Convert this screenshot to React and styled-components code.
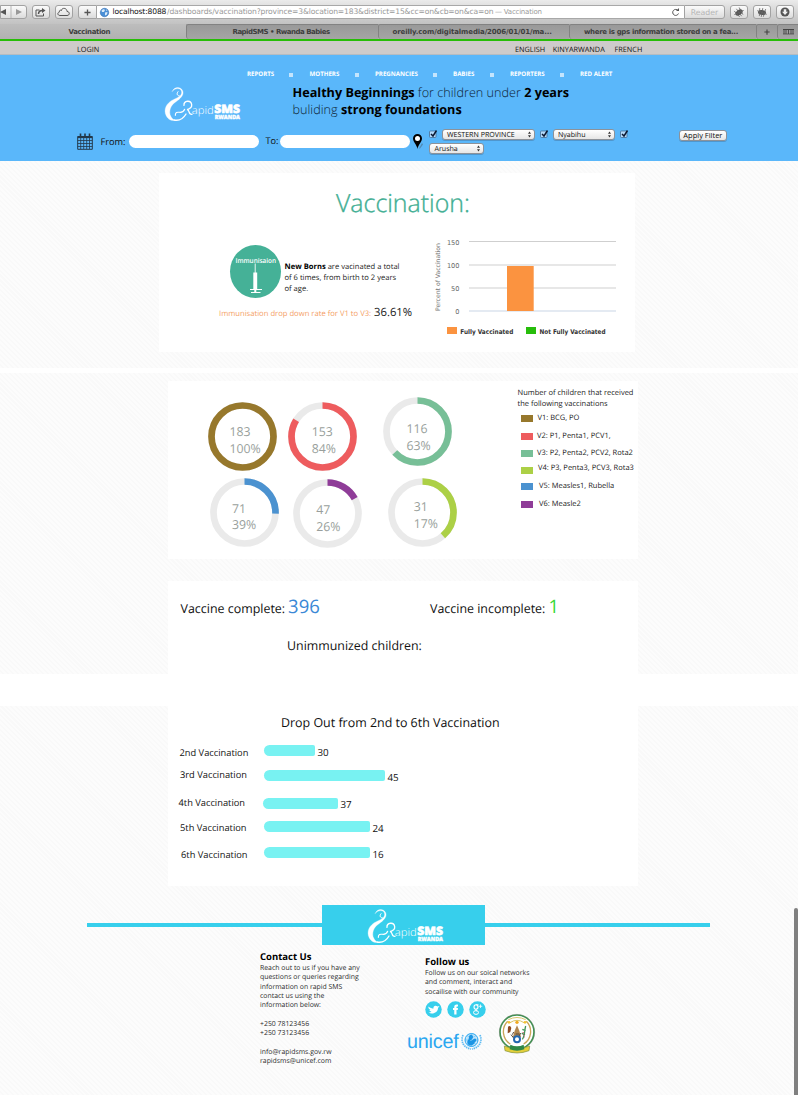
import React from "react";
import styled, { createGlobalStyle } from "styled-components";

const sans = '"Open Sans", "Noto Sans", sans-serif';
const system = '"DejaVu Sans", "Liberation Sans", sans-serif';
const aqua = "#37cfec";

const GlobalStyle = createGlobalStyle`
  * { box-sizing: border-box; }
  body { margin: 0; background: #fff; font-family: ${sans}; color: #111; overflow: hidden; text-rendering: geometricPrecision; }
  svg { display: block; flex: none; overflow: visible; }
`;

const Page = styled.div`
  position: relative;
  width: 798px;
  height: 1095px;
  overflow: hidden;
  white-space: nowrap;
`;

/* ---------- browser chrome ---------- */
const Toolbar = styled.div`
  display: flex;
  align-items: flex-start;
  height: 24px;
  padding-top: 5px;
  background: linear-gradient(#ebebeb, #d0d0d0 60%, #c2c2c2);
  font-family: ${system};
`;
const ToolButton = styled.div`
  display: flex;
  align-items: center;
  justify-content: ${(p) => p.$justify || "center"};
  width: ${(p) => p.$w}px;
  height: 14px;
  margin-left: ${(p) => p.$gap || 0}px;
  padding: 0 1px;
  border: 1px solid #a2a2a2;
  border-radius: ${(p) => p.$radius || "3px"};
  background: linear-gradient(#fbfbfb, #dcdcdc);
`;
const AddressField = styled.div`
  display: flex;
  align-items: center;
  width: 587px;
  height: 14px;
  padding: 0 4px 0 3px;
  border: 1px solid #a8a8a8;
  border-width: 1px 0;
  background: #fff;
  font-size: 7.6px;
  line-height: 12px;
  color: #999;
`;
const Host = styled.span`
  width: 54.5px;
  margin-left: 3.5px;
  color: #111;
  letter-spacing: -0.16px;
`;
const Path = styled.span`
  width: 325px;
  letter-spacing: -0.14px;
`;
const PageName = styled.span`
  flex: 1;
  font-size: 7px;
  letter-spacing: -0.22px;
  padding-left: 3px;
`;
const ReaderLabel = styled.span`
  color: #b5b5b5;
  font-size: 7.8px;
`;
const TabStrip = styled.div`
  display: grid;
  grid-template-columns: 186px 191.5px 191.5px 187px 21px 21px;
  height: 15px;
  background: linear-gradient(#bdbdbd, #b1b1b1);
`;
const Tab = styled.div`
  display: flex;
  align-items: center;
  padding-left: ${(p) => p.$pad}px;
  border: solid #828282;
  border-width: ${(p) => (p.$active ? "0" : "1px 0 0 1px")};
  border-radius: 2px 0 0 3px;
  background: ${(p) => (p.$active ? "transparent" : "linear-gradient(#999, #a5a5a5)")};
  color: #3e3e3e;
  font: bold 7px/14px ${system};
  letter-spacing: ${(p) => p.$ls || 0}px;
`;
const LanguageBar = styled.div`
  display: flex;
  height: 16px;
  padding: 3px 0 0 77px;
  border-top: 2px solid #27bd07;
  border-bottom: 1px solid #b5bcc2;
  background: #cecbca;
  font-size: 7.3px;
  line-height: 12px;
`;
const BarLink = styled.span`
  width: ${(p) => p.$w}px;
`;

/* ---------- header ---------- */
const Header = styled.header`
  height: 106px;
  background: #5ab7fa;
`;
const Nav = styled.nav`
  display: grid;
  grid-template-columns: 62.5px 65.5px 78px 57px 70px 40px;
  height: 28px;
  padding: 9px 0 0 247px;
  color: #fff;
  font-size: 6.15px;
  font-weight: 700;
  line-height: 10px;
`;
const NavItem = styled.div`
  display: flex;
  align-items: center;
  justify-content: space-between;
  padding-right: 16.5px;
`;
const NavDot = styled.i`
  width: 4px;
  height: 4px;
  margin-top: 2px;
  background: #c4e5fd;
`;
const Brand = styled.div`
  display: flex;
  height: 46px;
  padding-left: 163.5px;
`;
const BrandLogo = styled.div`
  width: 129px;
  padding-top: 3px;
`;
const Slogan = styled.p`
  margin: 1px 0 0;
  font-size: 12.65px;
  font-weight: 300;
  line-height: 17px;
  color: #0d2334;
  b { color: #000; font-weight: 700; }
`;
const Filters = styled.form`
  display: flex;
  height: 32px;
  padding-left: 77px;
  font-size: 9.2px;
`;
const CalendarHolder = styled.div`
  padding-top: 4px;
`;
const FilterLabel = styled.label`
  width: ${(p) => p.$w}px;
  margin: ${(p) => p.$top}px 0 0 ${(p) => p.$left}px;
  line-height: 12px;
`;
const DateInput = styled.input`
  width: 130px;
  height: 13px;
  margin: 6px 0 0;
  border: 0;
  border-radius: 7px;
  background: #fff;
`;
const PinHolder = styled.div`
  width: 19px;
  padding: 5px 0 0 3px;
`;
const Places = styled.div`
  display: flex;
  flex-wrap: wrap;
  align-content: flex-start;
  width: 250px;
  row-gap: 3px;
`;
const CheckHolder = styled.span`
  width: ${(p) => p.$w}px;
`;
const control = `
  border: 1px solid #8d9299;
  border-radius: 3px;
  background: linear-gradient(#fff, #e6e6e6);
  box-shadow: 0 1px 0 rgba(60, 90, 120, 0.35);
  color: #111;
  font-family: "Open Sans", sans-serif;
  font-size: 7.1px;
  line-height: 10px;
`;
const Picker = styled.div`
  ${control}
  display: flex;
  align-items: center;
  justify-content: space-between;
  width: ${(p) => p.$w}px;
  height: 11px;
  margin-right: ${(p) => p.$gap || 0}px;
  padding: 0 2px 0 4px;
`;
const ApplyButton = styled.button`
  ${control}
  width: 48px;
  height: 11px;
  margin: 1px 0 0 -0.5px;
  padding: 0;
  font-size: 7.5px;
  line-height: 9px;
`;

/* ---------- sections ---------- */
const Textured = styled.section`
  height: ${(p) => p.$h}px;
  margin-bottom: ${(p) => p.$gap || 0}px;
  padding-top: ${(p) => p.$top || 0}px;
  background: repeating-linear-gradient(45deg, #fcfcfc 0 2px, #f9f9f9 2px 3.5px);
`;
const Card = styled.div`
  width: ${(p) => p.$w || 470}px;
  height: ${(p) => p.$h}px;
  margin-left: ${(p) => p.$left || 168}px;
  margin-bottom: ${(p) => p.$gap || 0}px;
  background: #fff;
`;
const Title = styled.h1`
  margin: 0;
  padding: 12px 0 0 177px;
  height: 68px;
  font-size: 24.9px;
  font-weight: 300;
  line-height: 36px;
  color: #3fae93;
  -webkit-text-stroke: 0.35px #3fae93;
`;
const Overview = styled.div`
  display: flex;
  padding-left: 60px;
`;
const Facts = styled.div`
  width: 214px;
  padding-top: 4px;
`;
const FactRow = styled.div`
  display: flex;
  height: 59px;
  padding-left: 11px;
`;
const FactText = styled.p`
  margin: 16.5px 0 0 3.5px;
  font-size: 7.6px;
  line-height: 11px;
  color: #222;
  b { color: #000; }
`;
const DropRate = styled.p`
  display: flex;
  align-items: baseline;
  margin: 0;
  font-size: 7.65px;
  line-height: 17px;
  color: #f4a066;
`;
const RateLabel = styled.span`
  width: 155px;
`;
const RateValue = styled.span`
  font-size: 11.3px;
  color: #222;
`;

const DonutPanel = styled.div`
  display: flex;
  justify-content: space-between;
  padding-right: 0.5px;
`;
const DonutRow = styled.div`
  display: flex;
  height: ${(p) => p.$h}px;
`;
const DonutHolder = styled.div`
  width: 69px;
  margin: ${(p) => p.$top}px 0 0 ${(p) => p.$left}px;
`;
const Donuts = styled.div`
  padding-top: 15px;
`;
const Legend = styled.div`
  width: 120px;
  padding-top: 7px;
  font-size: 7.5px;
  line-height: 11px;
  color: #222;
`;
const LegendRows = styled.div`
  padding-top: 3px;
`;
const LegendRow = styled.div`
  display: flex;
  height: ${(p) => p.$h}px;
  padding-left: 3.5px;
`;
const Swatch = styled.i`
  width: 12px;
  height: 7px;
  margin: ${(p) => p.$top}px ${(p) => p.$gap}px 0 0;
  background: ${(p) => p.$color};
`;

const Stats = styled.div`
  display: flex;
  align-items: baseline;
  padding: 13px 0 0 12.5px;
  height: 53px;
  font-size: 12.45px;
  line-height: 26px;
`;
const Stat = styled.div`
  flex: none;
  width: 249.5px;
  span { margin-left: 3px; font-size: 18.5px; color: ${(p) => p.$color}; }
`;
const Unimmunized = styled.div`
  padding-left: 119px;
  font-size: 12.4px;
  line-height: 24px;
`;
const Spacer = styled.div`
  height: 32px;
`;
const DropTitle = styled.h2`
  margin: 0;
  padding: 5px 0 0 113px;
  height: 36px;
  font-size: 12.45px;
  font-weight: 400;
  line-height: 24px;
`;
const BarRow = styled.div`
  display: flex;
  height: ${(p) => p.$h}px;
  padding-left: ${(p) => p.$left}px;
  font-size: 9.3px;
  line-height: 12px;
`;
const BarName = styled.span`
  width: ${(p) => p.$w}px;
  margin-top: ${(p) => p.$top}px;
`;
const Bar = styled.i`
  height: 11px;
  margin: 3px 2.5px 0 0;
  border-radius: 5.5px 2px 2px 5.5px;
  background: #78f2f2;
`;
const BarValue = styled.span`
  margin-top: 4.5px;
  font-size: 9.8px;
`;

/* ---------- footer ---------- */
const Footer = styled.footer``;
const Ribbon = styled.div`
  display: flex;
  align-items: center;
  height: 40px;
  padding-left: 87px;
`;
const RibbonLine = styled.i`
  width: ${(p) => p.$w}px;
  height: 4px;
  background: ${aqua};
`;
const RibbonPlate = styled.div`
  width: 163px;
  height: 40px;
  padding: 3px 0 0 45px;
  background: ${aqua};
`;
const FooterColumns = styled.div`
  display: flex;
  padding-left: 260px;
`;
const FooterColumn = styled.div`
  width: ${(p) => p.$w}px;
  padding-top: ${(p) => p.$top}px;
  font-size: 6.9px;
  line-height: 9.33px;
  color: #2a2a2a;
  p { margin: 0 0 9.33px; }
`;
const FooterHeading = styled.h3`
  margin: 0 0 1px;
  font-size: 9.5px;
  font-weight: 700;
  line-height: 13px;
  color: #000;
`;
const Socials = styled.div`
  display: flex;
  gap: 5.2px;
  margin-top: -5px;
`;
const Partners = styled.div`
  display: flex;
  margin: -4px 0 0 -18px;
`;
const UnicefMark = styled.div`
  display: flex;
  width: 92px;
  padding-top: 17px;
  color: #2ba7f0;
  font: 19.8px/22px "Liberation Sans", Arial, sans-serif;
  letter-spacing: -0.2px;
  svg { margin: 0 0 0 2px; }
`;
const ScrollThumb = styled.div`
  position: absolute;
  top: 908px;
  right: 0;
  width: 4px;
  height: 190px;
  border-radius: 2px;
  background: #808080;
`;

function Logo() {
  return (
    <svg width="77" height="36" viewBox="0 0 231 108" fill="none" stroke="#fff" strokeLinecap="round">
      <path d="M25 16C29 3 49 0 56 14C61 27 49 38 36 47C18 58 14 78 20 90C23 97 28 101 33 103C20 105 12 99 7 90C-3 70 8 50 28 41C44 34 57 26 52 14C47 5 33 6 25 16Z" fill="#fff" strokeWidth="1" />
      <path d="M42 17C37 23 39 29 46 30" strokeWidth="3" />
      <path d="M30 102C45 105 58 98 66 84" strokeWidth="4" />
      <path d="M34 88C34 76 42 79 49 79C56 79 60 75 62 70" strokeWidth="3.5" />
      <path d="M60 58C59 43 81 41 83 56C84 63 77 69 69 71C79 71 71 86 84 85" strokeWidth="4" />
      <text x="83" y="83" fill="#fff" stroke="none" fontFamily={sans} fontWeight="300" fontSize="32" textLength="66" lengthAdjust="spacingAndGlyphs">apid</text>
      <text x="151" y="82" fill="#fff" stroke="#fff" strokeWidth="1.800" fontFamily={sans} fontWeight="800" fontSize="35" textLength="77" lengthAdjust="spacingAndGlyphs">SMS</text>
      <text x="152" y="99" fill="#fff" stroke="#fff" strokeWidth="1" fontFamily={sans} fontWeight="800" fontSize="17" textLength="76" lengthAdjust="spacingAndGlyphs">RWANDA</text>
    </svg>
  );
}

function GlobeIcon() {
  return (
    <svg width="9" height="9" viewBox="0 0 18 18">
      <circle cx="9" cy="9" r="8.5" fill="#4a8fd6" />
      <path d="M3 5C6 1 9 2 10 4L8 8L4 8ZM10 9L15 8L14 13L10 15ZM12 2L15 5L13 6Z" fill="#dcebf8" />
      <circle cx="9" cy="9" r="8.5" fill="none" stroke="#2b62a8" />
    </svg>
  );
}

function BackForwardIcon() {
  return (
    <svg width="22" height="10" viewBox="0 0 22 10">
      <path d="M4 2V8L-2 5Z" fill="#555" />
      <path d="M9 -1V11" stroke="#b5b5b5" />
      <path d="M14 2V8L20 5Z" fill="#999" />
    </svg>
  );
}

function ShareIcon() {
  return (
    <svg width="11" height="9" viewBox="0 0 22 18" fill="none" stroke="#555" strokeWidth="2">
      <path d="M9 4H2V16H17V11" />
      <path d="M7 12C7 7 11 5 15 5" strokeWidth="3" />
      <path d="M14 0L21 5L14 10Z" fill="#555" stroke="none" />
    </svg>
  );
}

function CloudIcon() {
  return (
    <svg width="13" height="10" viewBox="0 0 26 20" fill="none" stroke="#555" strokeWidth="2">
      <path d="M6 17H20C26 17 26 9 20 9C20 1 9 1 9 7C6 5 4 8 5 10C0 11 1 17 6 17Z" />
    </svg>
  );
}

function PlusIcon({ size = 7, color = "#555" }) {
  return (
    <svg width={size} height={size} viewBox="0 0 8 8" stroke={color} strokeWidth="1.5">
      <path d="M4 .5V7.5M.5 4H7.5" />
    </svg>
  );
}

function ReloadIcon() {
  return (
    <svg width="8" height="8" viewBox="0 0 16 16" fill="none" stroke="#555" strokeWidth="2">
      <path d="M12 5A6 6 0 1 0 13 11" />
      <path d="M8 6H14V0Z" fill="#555" stroke="none" />
    </svg>
  );
}

function BugIcon({ tilt }) {
  return (
    <svg width="12" height="11" viewBox="0 0 24 22" stroke="#666" strokeWidth="1.5">
      <g transform={`rotate(${tilt} 12 11)`}>
        <ellipse cx="12" cy="11" rx="8" ry="5" fill="#555" stroke="none" />
        <path d="M6 3L8 19M12 2V20M18 3L16 19M2 9L22 13" />
      </g>
    </svg>
  );
}

function DownloadIcon() {
  return (
    <svg width="10" height="10" viewBox="0 0 20 20">
      <circle cx="10" cy="10" r="9" fill="#555" />
      <path d="M7.500 4.500H12.500V9.500H16L10 16L4 9.500H7.500Z" fill="#eee" />
    </svg>
  );
}

function TabsIcon() {
  return (
    <svg width="11" height="6" viewBox="0 0 11 6" fill="none" stroke="#444">
      <path d="M0 .5H11" />
      <path d="M1 1V5M3 1V5M5.500 1V5M8 1V5M10 1V5" strokeWidth=".9" />
      <path d="M0 5H11" strokeWidth=".7" />
    </svg>
  );
}

function CalendarIcon() {
  return (
    <svg width="16" height="17" viewBox="0 0 16 17" fill="none" stroke="#23394b">
      <path d="M.7 3.500H15.300V16.300H.7Z" strokeWidth="1" />
      <path d="M.7 4.200H15.300" strokeWidth="1.800" />
      <path d="M.7 7.500H15.300M.7 10.500H15.300M.7 13.500H15.300M3.700 5V16M6.700 5V16M9.700 5V16M12.500 5V16" strokeWidth=".8" />
      <path d="M3.500 .5V4M8 .5V4M12.500 .5V4" strokeWidth="1.600" />
    </svg>
  );
}

function PinIcon() {
  return (
    <svg width="11" height="15" viewBox="0 0 22 30">
      <path d="M12 29L18 18L20 21L14 29Z" fill="#4b6b86" opacity=".6" />
      <path d="M9 30C8 22 0 16 0 9A9 9 0 0 1 18 9C18 16 10 22 9 30Z" fill="#000" />
      <circle cx="9" cy="9" r="5" fill="#fff" />
    </svg>
  );
}

function CheckIcon() {
  return (
    <svg width="9" height="10" viewBox="0 0 18 20" fill="none">
      <rect x="1" y="4" width="13" height="13" rx="2" fill="#b4dafb" stroke="#41688f" strokeWidth="1.500" />
      <path d="M4 10L8 14L15 3" stroke="#0b1730" strokeWidth="3" />
    </svg>
  );
}

function StepperIcon() {
  return (
    <svg width="5" height="7" viewBox="0 0 10 14" fill="#333">
      <path d="M5 1L8 5.500H2ZM5 13L8 8.500H2Z" />
    </svg>
  );
}

function ImmunisationBadge() {
  return (
    <svg width="51" height="53" viewBox="0 0 51 53">
      <ellipse cx="25.500" cy="26.500" rx="25.500" ry="26.500" fill="#45b197" />
      <text x="5.500" y="17.500" fill="#fff" fontFamily={sans} fontSize="6.800" fontWeight="600" textLength="40.500" lengthAdjust="spacingAndGlyphs">Immunisaion</text>
      <path d="M25.200 18.500V28" stroke="#fff" strokeWidth=".9" />
      <path d="M23.300 27.500H27.200V44H23.300Z" fill="#fff" />
      <path d="M20 44.500H32M21 47.500H30.500" stroke="#fff" strokeWidth="1" />
      <path d="M25.300 44V47.500" stroke="#fff" strokeWidth="2" />
    </svg>
  );
}

function VaccinationChart() {
  return (
    <svg width="180" height="105" viewBox="0 0 180 105" fontFamily={system}>
      <text transform="translate(7 70) rotate(-90)" fontSize="6.200" fill="#777" textLength="68">Percent of Vaccination</text>
      {[["150", 0.5], ["100", 24], ["50", 47], ["0", 70]].map(([label, y]) => (
        <g key={label}>
          <text x="26.500" y={y + 3} fontSize="6.600" fill="#666" textAnchor="end">{label}</text>
          <path d={`M36 ${y}H183`} stroke={label === "0" ? "#c9d5e6" : "#cfcfcf"} strokeWidth="1.200" />
        </g>
      ))}
      <rect x="74" y="25" width="26.700" height="45" fill="#fb9340" />
      <rect x="14" y="86" width="10" height="7" fill="#fb9340" />
      <text x="27.300" y="92.500" fontSize="6.500" fontWeight="700" fill="#333" textLength="53" lengthAdjust="spacingAndGlyphs">Fully Vaccinated</text>
      <rect x="93" y="86" width="10" height="7" fill="#27bd0b" />
      <text x="106.500" y="92.500" fontSize="6.500" fontWeight="700" fill="#333" textLength="66" lengthAdjust="spacingAndGlyphs">Not Fully Vaccinated</text>
    </svg>
  );
}

function Donut({ donut }) {
  const radius = 31;
  const length = 2 * Math.PI * radius;
  return (
    <DonutHolder $top={donut.top} $left={donut.left}>
      <svg width="69" height="69" viewBox="0 0 69 69" fill="none" fontFamily={sans}>
        <circle cx="34.500" cy="34.500" r={radius} stroke="#eaeaea" strokeWidth="6.700" />
        <circle
          cx="34.500"
          cy="34.500"
          r={radius}
          stroke={donut.color}
          strokeWidth="6.700"
          strokeDasharray={`${length * donut.arc} ${length}`}
          transform="rotate(-90 34.500 34.500)"
        />
        <text fontSize="12.300" fill="#999f9c">
          <tspan x={donut.x} y={donut.y}>{donut.count}</tspan>
          <tspan x={donut.x} y={donut.y + 16.8}>{donut.percent}</tspan>
        </text>
      </svg>
    </DonutHolder>
  );
}

function TwitterBadge() {
  return (
    <svg width="17" height="17" viewBox="0 0 34 34">
      <circle cx="17" cy="17" r="16.500" fill={aqua} />
      <path d="M7 11C10 14 14 15 17 15C16 9 22 8 25 11L29 10L26 14C26 23 15 28 7 23C10 23 12 22 13 21C10 21 9 19 9 18H11C8 16 6 14 7 11Z" fill="#fff" />
    </svg>
  );
}

function FacebookBadge() {
  return (
    <svg width="17" height="17" viewBox="0 0 34 34">
      <circle cx="17" cy="17" r="16.500" fill={aqua} />
      <path d="M14.500 27V18H12V14H14.500C14 8 17 6.500 22 7.500V11C19.500 10.500 19 11 19 14H22L21.500 18H19V27Z" fill="#fff" />
    </svg>
  );
}

function GoogleBadge() {
  return (
    <svg width="17" height="17" viewBox="0 0 34 34" fill="none" stroke="#fff">
      <circle cx="17" cy="17" r="16.500" fill={aqua} stroke="none" />
      <ellipse cx="14" cy="12" rx="4" ry="4.500" strokeWidth="2.200" />
      <path d="M14 7.500H19M16 16C12 17 12 18 16 20" strokeWidth="1.800" />
      <ellipse cx="14" cy="23" rx="5" ry="3.800" strokeWidth="2" />
      <path d="M23 7V14M19.500 10.500H26.500" strokeWidth="1.600" />
    </svg>
  );
}

function UnicefGlobe() {
  return (
    <svg width="21" height="20" viewBox="0 0 42 40" fill="none" stroke="#2ba7f0">
      <circle cx="21" cy="18" r="13" strokeWidth="2" fill="#bfe4fb" />
      <path d="M21 5V31M8 18H34M12 9C18 14 24 14 30 9M12 27C18 22 24 22 30 27" strokeWidth=".8" />
      <path d="M16 12C16 6 24 6 24 12C24 16 20 17 18 20C22 20 24 16 28 15C32 16 31 21 28 22C26 26 24 29 18 29C12 28 11 20 15 17Z" fill="#1b95e4" stroke="none" />
      <path d="M4 8C-1 20 4 33 20 36M38 8C43 20 38 33 22 36" strokeWidth="3.500" strokeDasharray="3 1.500" opacity=".75" />
    </svg>
  );
}

function RwandaSeal() {
  return (
    <svg width="36" height="40" viewBox="0 0 108 120" fill="none">
      <circle cx="54" cy="54" r="51" fill="#fff" stroke="#3d9350" strokeWidth="5" />
      <circle cx="54" cy="54" r="53" stroke="#856f78" strokeWidth="1.500" opacity=".6" />
      <path d="M26 22C6 42 10 76 34 90M82 22C102 42 98 76 74 90" stroke="#c9a558" strokeWidth="4" />
      <path d="M28 17Q54 4 80 17M33 26Q54 12 75 26" stroke="#d8c46a" strokeWidth="3" />
      <circle cx="54" cy="25" r="5" fill="#f3aa20" />
      <circle cx="30" cy="25" r="4" fill="#f3c233" />
      <circle cx="78" cy="25" r="4" fill="#f3c233" />
      <path d="M27 38Q34 32 37 42L34 54L26 58Z" fill="#8d4a22" />
      <path d="M54 34L61 50L66 68L54 78L42 68L47 50Z" fill="#b18650" />
      <path d="M44 54L40 62M50 60H60M36 62L44 72M65 57L60 66" stroke="#5d4a3a" strokeWidth="3" />
      <circle cx="54" cy="76" r="9" stroke="#2367b0" strokeWidth="6" fill="#fff" />
      <path d="M80 36C76 50 78 66 70 76M70 46L80 50M68 58L78 62" stroke="#43955a" strokeWidth="4" />
      <path d="M72 54L76 70" stroke="#c22f4a" strokeWidth="3" strokeDasharray="3 4" />
      <path d="M16 96Q54 112 92 96L90 110Q54 124 18 110Z" fill="#e3cf3b" stroke="#7f8f3a" strokeWidth="2" />
      <path d="M34 92Q54 102 74 92L76 106Q54 114 32 106Z" fill="#2f8847" />
    </svg>
  );
}

const navItems = ["REPORTS", "MOTHERS", "PREGNANCIES", "BABIES", "REPORTERS", "RED ALERT"];

const donutRows = [
  {
    height: 81.5,
    items: [
      { count: "183", percent: "100%", color: "#97782c", arc: 1, top: 5.8, left: 40.2, x: 21.5, y: 34.2 },
      { count: "153", percent: "84%", color: "#ee5c5e", arc: 0.837, top: 5.8, left: 11.1, x: 23.7, y: 34.2 },
      { count: "116", percent: "63%", color: "#77bf97", arc: 0.63, top: 0.8, left: 25.4, x: 23.5, y: 35.7 },
    ],
  },
  {
    height: 70,
    items: [
      { count: "71", percent: "39%", color: "#4b92d0", arc: 0.255, top: 0.8, left: 41.5, x: 22, y: 34.5 },
      { count: "47", percent: "26%", color: "#8f3c98", arc: 0.17, top: 1.5, left: 14, x: 23.3, y: 34.8 },
      { count: "31", percent: "17%", color: "#acd046", arc: 0.385, top: 0.8, left: 26.5, x: 25.7, y: 33.2 },
    ],
  },
];

const legend = [
  { text: "V1: BCG, PO", color: "#97782c", h: 18, swatch: 3, gap: 4.5 },
  { text: "V2: P1, Penta1, PCV1,", color: "#ee5c5e", h: 16.5, swatch: 3, gap: 4 },
  { text: "V3: P2, Penta2, PCV2, Rota2", color: "#77bf97", h: 15.8, swatch: 3.2, gap: 4 },
  { text: "V4: P3, Penta3, PCV3, Rota3", color: "#acd046", h: 17.7, swatch: 4, gap: 5 },
  { text: "V5: Measles1, Rubella", color: "#4b92d0", h: 18, swatch: 2.6, gap: 6 },
  { text: "V6: Measle2", color: "#8f3c98", h: 12, swatch: 2.6, gap: 6 },
];

const dropOut = [
  { name: "2nd Vaccination", value: 30, bar: 51, h: 25, left: 11.5, w: 84.5, top: 4.5 },
  { name: "3rd Vaccination", value: 45, bar: 121, h: 27.5, left: 12, w: 84, top: 2.3 },
  { name: "4th Vaccination", value: 37, bar: 75, h: 23.5, left: 10.5, w: 84.5, top: 2.3 },
  { name: "5th Vaccination", value: 24, bar: 106, h: 26, left: 12, w: 84, top: 4.3 },
  { name: "6th Vaccination", value: 16, bar: 106.5, h: 20, left: 13, w: 82.5, top: 5.3 },
];

export default function App() {
  return (
    <Page>
      <GlobalStyle />
      <Toolbar>
        <ToolButton $w={27} $radius="0 3px 3px 0" $justify="flex-start"><BackForwardIcon /></ToolButton>
        <ToolButton $w={18} $gap={4.5}><ShareIcon /></ToolButton>
        <ToolButton $w={18} $gap={5}><CloudIcon /></ToolButton>
        <ToolButton $w={19} $gap={5.5} $radius="3px 0 0 3px"><PlusIcon /></ToolButton>
        <AddressField>
          <GlobeIcon />
          <Host>localhost:8088</Host>
          <Path>/dashboards/vaccination?province=3&amp;location=183&amp;district=15&amp;cc=on&amp;cb=on&amp;ca=on</Path>
          <PageName>— Vaccination</PageName>
          <ReloadIcon />
        </AddressField>
        <ToolButton $w={41} $radius="0 3px 3px 0"><ReaderLabel>Reader</ReaderLabel></ToolButton>
        <ToolButton $w={18} $gap={5}><BugIcon tilt={-35} /></ToolButton>
        <ToolButton $w={18} $gap={5}><BugIcon tilt={10} /></ToolButton>
        <ToolButton $w={18} $gap={5}><DownloadIcon /></ToolButton>
      </Toolbar>
      <TabStrip>
        <Tab $active $pad={68.5} $ls={-0.38}>Vaccination</Tab>
        <Tab $pad={45.5} $ls={-0.5}>RapidSMS • Rwanda Babies</Tab>
        <Tab $pad={14} $ls={-0.12}>oreilly.com/digitalmedia/2006/01/01/ma...</Tab>
        <Tab $pad={14} $ls={-0.35}>where is gps information stored on a fea...</Tab>
        <Tab $pad={7}><PlusIcon size={6} color="#444" /></Tab>
        <Tab $pad={5}><TabsIcon /></Tab>
      </TabStrip>
      <LanguageBar>
        <BarLink $w={438}>LOGIN</BarLink>
        <BarLink $w={37.8}>ENGLISH</BarLink>
        <BarLink $w={61.7}>KINYARWANDA</BarLink>
        <BarLink $w={40}>FRENCH</BarLink>
      </LanguageBar>

      <Header>
        <Nav>
          {navItems.map((item, i) => (
            <NavItem key={item}>
              {item}
              {i < navItems.length - 1 && <NavDot />}
            </NavItem>
          ))}
        </Nav>
        <Brand>
          <BrandLogo><Logo /></BrandLogo>
          <Slogan>
            <b>Healthy Beginnings</b> for children under <b>2 years</b>
            <br />
            buliding <b>strong foundations</b>
          </Slogan>
        </Brand>
        <Filters>
          <CalendarHolder><CalendarIcon /></CalendarHolder>
          <FilterLabel $w={28.5} $left={7.5} $top={7}>From:</FilterLabel>
          <DateInput aria-label="From" />
          <FilterLabel $w={15} $left={6.4} $top={6}>To:</FilterLabel>
          <DateInput aria-label="To" />
          <PinHolder><PinIcon /></PinHolder>
          <Places>
            <CheckHolder $w={12.5}><CheckIcon /></CheckHolder>
            <Picker $w={93.5} $gap={5}>WESTERN PROVINCE<StepperIcon /></Picker>
            <CheckHolder $w={12.5}><CheckIcon /></CheckHolder>
            <Picker $w={62} $gap={5}>Nyabihu<StepperIcon /></Picker>
            <CheckHolder $w={50}><CheckIcon /></CheckHolder>
            <Picker $w={55}>Arusha<StepperIcon /></Picker>
          </Places>
          <ApplyButton type="button">Apply Filter</ApplyButton>
        </Filters>
      </Header>

      <Textured $h={207} $top={12} $gap={5}>
        <Card $w={476} $h={179} $left={159}>
          <Title>Vaccination:</Title>
          <Overview>
            <Facts>
              <FactRow>
                <ImmunisationBadge />
                <FactText>
                  <b>New Borns</b> are vacinated a total
                  <br />of 6 times, from birth to 2 years
                  <br />of age.
                </FactText>
              </FactRow>
              <DropRate>
                <RateLabel>Immunisation drop down rate for V1 to V3:</RateLabel>
                <RateValue>36.61%</RateValue>
              </DropRate>
            </Facts>
            <VaccinationChart />
          </Overview>
        </Card>
      </Textured>

      <Textured $h={301} $top={8}>
        <Card $h={178} $gap={22}>
          <DonutPanel>
            <Donuts>
              {donutRows.map((row) => (
                <DonutRow key={row.height} $h={row.height}>
                  {row.items.map((donut) => <Donut key={donut.count} donut={donut} />)}
                </DonutRow>
              ))}
            </Donuts>
            <Legend>
              Number of children that received
              <br />the following vaccinations
              <LegendRows>
                {legend.map((item) => (
                  <LegendRow key={item.text} $h={item.h}>
                    <Swatch $color={item.color} $top={item.swatch - 0.6} $gap={item.gap} />
                    {item.text}
                  </LegendRow>
                ))}
              </LegendRows>
            </Legend>
          </DonutPanel>
        </Card>
        <Card $h={93}>
          <Stats>
            <Stat $color="#3a88d6">Vaccine complete:<span>396</span></Stat>
            <Stat $color="#35d935">Vaccine incomplete:<span>1</span></Stat>
          </Stats>
          <Unimmunized>Unimmunized children:</Unimmunized>
        </Card>
      </Textured>

      <Spacer />

      <Textured $h={389}>
        <Card $h={180} $gap={19}>
          <DropTitle>Drop Out from 2nd to 6th Vaccination</DropTitle>
          {dropOut.map((row) => (
            <BarRow key={row.name} $h={row.h} $left={row.left}>
              <BarName $w={row.w} $top={row.top}>{row.name}</BarName>
              <Bar style={{ width: row.bar }} />
              <BarValue>{row.value}</BarValue>
            </BarRow>
          ))}
        </Card>
        <Footer>
          <Ribbon>
            <RibbonLine $w={235} />
            <RibbonPlate><Logo /></RibbonPlate>
            <RibbonLine $w={225} />
          </Ribbon>
          <FooterColumns>
            <FooterColumn $w={165} $top={5}>
              <FooterHeading>Contact Us</FooterHeading>
              <p>
                Reach out to us if you have any<br />
                questions or queries regarding<br />
                information on rapid SMS<br />
                contact us using the<br />
                information below:
              </p>
              <p>+250 78123456<br />+250 73123456</p>
              <p>info@rapidsms.gov.rw<br />rapidsms@unicef.com</p>
            </FooterColumn>
            <FooterColumn $w={130} $top={10}>
              <FooterHeading>Follow us</FooterHeading>
              <p>
                Follow us on our soical networks<br />
                and comment, interact and<br />
                socailise with our community
              </p>
              <Socials>
                <TwitterBadge />
                <FacebookBadge />
                <GoogleBadge />
              </Socials>
              <Partners>
                <UnicefMark>unicef<UnicefGlobe /></UnicefMark>
                <RwandaSeal />
              </Partners>
            </FooterColumn>
          </FooterColumns>
        </Footer>
      </Textured>
      <ScrollThumb />
    </Page>
  );
}
